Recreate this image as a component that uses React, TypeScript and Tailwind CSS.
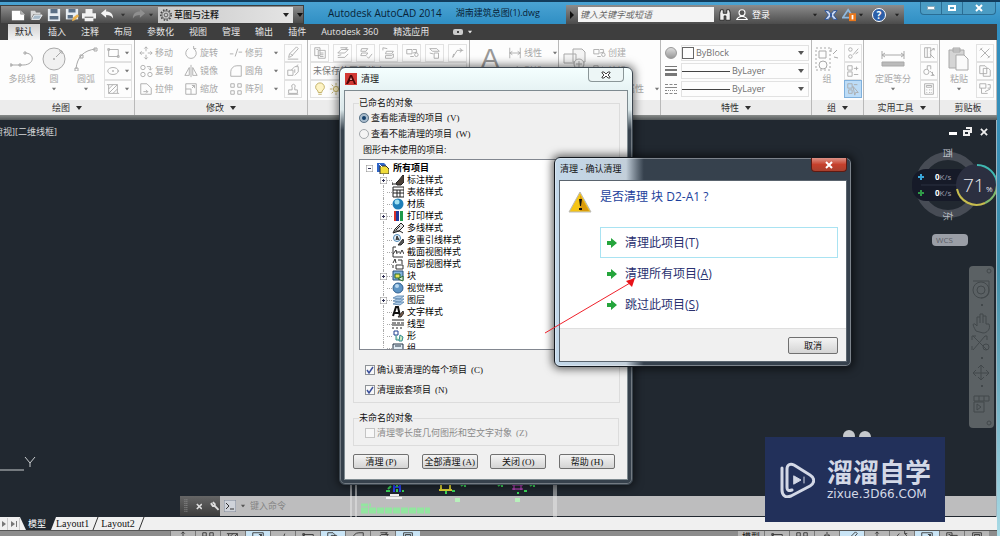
import { useState } from "react";
import type { ReactNode } from "react";
import clsx from "clsx";

const tabs = ["默认", "插入", "注释", "布局", "参数化", "视图", "管理", "输出", "插件", "Autodesk 360", "精选应用"];

// line drawings on a 16 x 16 grid
const glyphs: Record<string, string> = {
  rect: "M3 4h11v8H3zM2 3h2v2H2zM13 11h2v2h-2z",
  ellipse: "M2 8a6 4 0 1 0 12 0a6 4 0 1 0-12 0M7 8h2M8 7v2M13 8h2",
  hatch: "M3 3h10v10H3zM3 8l5-5M3 13l10-10M8 13l5-5M1 3h2M13 13h2",
  move: "M8 1v5M8 10v5M1 8h5M10 8h5M6 3l2-2 2 2M6 13l2 2 2-2M3 6L1 8l2 2M13 6l2 2-2 2",
  copy: "M2 4a2.500 2.500 0 1 0 5 0a2.500 2.500 0 1 0-5 0M2 12a2.500 2.500 0 1 0 5 0a2.500 2.500 0 1 0-5 0M10 12a2.500 2.500 0 1 0 5 0a2.500 2.500 0 1 0-5 0M9 3h4v4M13 7l-2-2M13 7l2-2",
  stretch: "M2 2h7l5 5v7H2zM5 11h5M8 9l2 2-2 2",
  rotate: "M5 3a6 6 0 1 0 6 0M11 3V0M11 3h3",
  mirror: "M8 1v14M6 4v9H1zM10 4v9h5z",
  scale: "M2 2h12v12H2zM2 8h6v6M9 7l3-3M9 4h3v3",
  trim: "M1 9h4M7 12l3-9M11 7h4",
  fillet: "M14 2v12H2V9a7 7 0 0 1 7-7h5",
  array: "M2 2h4v4H2zM10 2h4v4h-4zM2 10h4v4H2zM10 10h4v4h-4z",
  erase: "M3 13l3-1 8-9-2-2-8 8zM5 9l3 2M2 15h12",
  explode: "M2 7h6v6H2zM6 7l4-4h4v6l-4 4M10 6v4M12 2l2-1",
  offset: "M2 14h12M3 13V9h4V6a2 2 0 1 1 3 0v3h3v4z",
  layers: "M2 2h6v9H2zM6 5h8v9H6zM8 8h4M8 10h4M8 12h4M4 4h2",
  layerSet: "M2 8l4-4h8l-4 4zM2 11l4-1M2 13h8l4-4M5 2h8l-3 2",
  layerCheck: "M3 3h7l-2 3H2zM3 8h7l-2 3H2zM9 12l2 2 4-5",
  layerBack: "M5 6h8l-2 3H4zM4 11h7l2-2v4l-2 1H4zM1 2l5 1M1 2v3",
  layerOff: "M2 3h8l3 3h-8zM7 8h5v6H7zM2 8l4 1",
  dimension: "M2 2v12M14 2v12M2 8h12M5 6L2 8l3 2M11 6l3 2-3 2",
  leader: "M2 13L7 5h7M2 13l1-4M10 3a2 2 0 1 1 0 4",
  block: "M2 4h6v5H2zM9 8l5-1M6 12h4M11 10a2 2 0 1 0 4 0a2 2 0 1 0-4 0M9 4h4v3",
  ungroup: "M3 4a2 2 0 1 0 4 0a2 2 0 1 0-4 0M3 12a2 2 0 1 0 4 0a2 2 0 1 0-4 0M8 10l6-7M11 9l3-2",
  groupEdit: "M2 2h5v5H2zM2 9h5v5H2zM9 5h5M12 3v4M9 12h5",
  groupPick: "M2 2h5v5H2zM3 9h4v4H3zM8 5l6 7-3 0-1 3zM9 3h4",
  select: "M3 2h7v11H3zM6 2v11M9 6l5-3M9 9l5 5M12 3h2v2",
  measure: "M2 9a3 3 0 1 0 6 0a3 3 0 1 0-6 0M6 6V2h4v4M9 8l5 5M10 13l4 0M12 9v4",
  calc: "M3 2h10v12H3zM5 4h6v2H5zM5 9h1M8 9h1M10 9h1M5 12h1M8 12h1M10 12h1",
  cut: "M3 3l10 10M13 3L3 13M5 2l-3 3M11 14l3-3",
  clipCopy: "M2 2h6l2 2v7H2zM6 5h6l2 2v7H6z",
  match: "M2 2h7v5H2zM4 7v6h7M11 3h3v4h-3M8 11l6-3",
};

function Glyph({ name, className }: { name: string; className?: string }) {
  return (
    <svg viewBox="0 0 16 16" className={clsx("size-3.5 shrink-0", className)} fill="none" stroke="currentColor" strokeWidth="1">
      <path d={glyphs[name]} />
    </svg>
  );
}

function Caret({ className }: { className?: string }) {
  return (
    <svg viewBox="0 0 6 4" className={clsx("h-1 w-1.5 shrink-0", className)} fill="currentColor">
      <path d="M0 0h6L3 4z" />
    </svg>
  );
}

function Panel({ title, className, caret = true, children }: { title: string; className: string; caret?: boolean; children: ReactNode }) {
  return (
    <section className={clsx("flex flex-col overflow-hidden border-r border-[#b9b9b9]", className)}>
      <div className="flex h-[60px] gap-1 bg-[#fdfdfd] pt-1 text-[#a9a9a9]">{children}</div>
      <button className="flex h-[15px] items-center justify-center gap-1.5 bg-[#ececec] text-[#303030]">
        {title}
        {caret && <Caret />}
      </button>
    </section>
  );
}

function Tool({ icon, label, caret }: { icon: string; label: string; caret?: boolean }) {
  return (
    <button className="flex h-[18px] items-center gap-0.5 whitespace-nowrap">
      <Glyph name={icon} />
      {label}
      {caret && <Caret className="ml-2 scale-75 text-[#777]" />}
    </button>
  );
}

function BigTool({ label, caret, className, children }: { label: string; caret?: boolean; className?: string; children: ReactNode }) {
  return (
    <button className={clsx("flex flex-col items-center whitespace-nowrap", className)}>
      <span className="flex h-[29px] items-center justify-center">{children}</span>
      <span className="h-3 leading-3">{label}</span>
      {caret && <Caret className="mt-0.5 scale-75 text-[#777]" />}
    </button>
  );
}

function SmallButtons({ icons, split, active }: { icons: string[]; split?: boolean; active?: string }) {
  return (
    <div className="flex flex-col">
      {icons.map((icon) => (
        <button
          key={icon}
          aria-label={icon}
          className={clsx(
            "flex h-[18px] items-center justify-center border",
            split ? "w-7 gap-1" : "w-[18px]",
            icon === active ? "border-[#7fb0dc] bg-[#bcdcf7]" : "border-[#e2e2e2]"
          )}
        >
          <Glyph name={icon} />
          {split && <Caret className="scale-75 text-[#777]" />}
        </button>
      ))}
    </div>
  );
}

function PropertySelect({ label, value, line, children }: { label: string; value: string; line?: boolean; children: ReactNode }) {
  return (
    <div className="flex h-[18px] items-center gap-0.5">
      <span className="flex w-4 justify-center">{children}</span>
      <span className="relative flex h-4 flex-1 items-center border border-[#e2e2e2]">
        {line ? <span className="h-px w-12 bg-[#444]" /> : <span className="size-3 border border-[#666]" />}
        <select aria-label={label} className="h-3.5 flex-1 appearance-none pl-0.5 text-[9px] leading-3.5 text-[#707070] outline-none" defaultValue={value}>
          <option>{value}</option>
        </select>
        <Caret className="absolute right-1 text-[#555]" />
      </span>
    </div>
  );
}

function QuickIcon({ label, children }: { label: string; children: ReactNode }) {
  return (
    <button aria-label={label} className="flex w-[18px] items-center justify-center">
      <svg viewBox="0 0 16 16" className="size-3.5">
        {children}
      </svg>
    </button>
  );
}

function TitleBar() {
  return (
    <header className="flex h-6 shrink-0 items-end border-t-2 border-[#123c5c] bg-linear-to-b from-[#4aa3d3] to-[#2f8fc4]">
      <div className="flex h-[19px] w-[304px] shrink-0 items-center border border-[#3d3d3d] bg-linear-to-b from-[#8d8d8d] to-[#4c4c4c] pl-2">
        <QuickIcon label="新建">
          <path d="M1 3h10l4 4v7H1z" fill="#fff" />
          <path d="M11 3v4h4" fill="#bbb" stroke="#999" />
        </QuickIcon>
        <QuickIcon label="打开">
          <path d="M2 3h5l1 2h5v2H5l-3 6z" fill="#d8d8d8" />
          <path d="M6 8h9l-3 5H3z" fill="#a7b9c8" stroke="#fff" />
        </QuickIcon>
        <QuickIcon label="保存">
          <path d="M1 1h14v14H1z" fill="#e6ecf2" />
          <path d="M4 1h8v5H4zM3 9h10v4H3z" fill="#5a6f86" />
        </QuickIcon>
        <QuickIcon label="另存为">
          <path d="M1 1h14v12H1z" fill="#e6ecf2" />
          <path d="M4 1h8v4H4zM3 8h6v4H3z" fill="#5a6f86" />
          <path d="M8 15l1-4 5-4 2 2-5 5z" fill="#e9b04d" />
        </QuickIcon>
        <QuickIcon label="打印">
          <path d="M4 1h8v5H4zM0 6h16v6H0zM3 11h10v4H3z" fill="#f1f1f1" />
          <path d="M3 10h10v1H3z" fill="#444" />
        </QuickIcon>
        <QuickIcon label="放弃">
          <path d="M1 6l6-5v3c5 0 8 3 8 8-2-3-4-4-8-4v3z" fill="#f4f4f4" />
        </QuickIcon>
        <Caret className="mx-1 scale-75 text-[#333]" />
        <QuickIcon label="重做">
          <path d="M15 6L9 1v3c-5 0-8 3-8 8 2-3 4-4 8-4v3z" fill="#8f8f8f" />
        </QuickIcon>
        <Caret className="mr-1 scale-75 text-[#333]" />
        <div className="relative flex h-4 w-[136px] items-center bg-linear-to-r from-[#c9c9c9] to-[#e4e4e4]">
          <svg viewBox="0 0 16 16" className="mx-0.5 size-3" fill="none" stroke="#444">
            <circle cx="8" cy="8" r="2.500" />
            <circle cx="8" cy="8" r="5.500" />
            <circle cx="8" cy="8" r="7" strokeDasharray="2 2" strokeWidth="2" />
          </svg>
          <select aria-label="工作空间" className="h-4 flex-1 appearance-none text-[9px] font-medium leading-4 text-[#111] outline-none">
            <option>草图与注释</option>
          </select>
          <Caret className="absolute right-1 text-[#222]" />
        </div>
        <Caret className="ml-1 text-[#111]" />
      </div>
      <h1 className="ml-6 flex h-[22px] items-center gap-3.5 whitespace-nowrap text-[#082236]">
        <span className="text-[10px]">Autodesk AutoCAD 2014</span>
        <span>湖南建筑总图(1).dwg</span>
      </h1>
      <div className="ml-auto flex h-[19px] w-[338px] shrink-0 items-center bg-linear-to-b from-[#8d8d8d] to-[#4c4c4c] text-white">
        <svg viewBox="0 0 4 8" className="mx-1 h-2 w-1">
          <path d="M0 0l4 4-4 4z" fill="#111" />
        </svg>
        <input
          aria-label="搜索"
          placeholder="键入关键字或短语"
          className="h-[15px] w-[136px] bg-[#f4f4f4] pl-0.5 text-[9px] italic placeholder:text-[#666]"
        />
        <svg viewBox="0 0 16 16" className="ml-1 size-3.5">
          <path d="M2 6l1-4h3v4h4V2h3l1 4v8h-5V9H7v5H2z" fill="#eee" stroke="#222" />
        </svg>
        <button className="ml-1 flex items-center gap-1">
          <svg viewBox="0 0 16 16" className="size-3" fill="#555" stroke="#fff" strokeWidth="1.500">
            <circle cx="8" cy="5" r="4" />
            <path d="M1 14c1-3 4-3 5-4h4c1 1 4 1 5 4z" />
          </svg>
          登录
        </button>
        <Caret className="ml-auto scale-75 text-[#222]" />
        <svg viewBox="0 0 16 16" className="ml-1.5 size-3.5">
          <path d="M1 3h4l4 5-4 5H1l4-5zM15 3h-4L7 8l4 5h4l-4-5z" fill="#c9d8f2" stroke="#25509b" />
        </svg>
        <svg viewBox="0 0 16 16" className="ml-1 size-3.5">
          <path d="M7 2l6 9H1z" fill="none" stroke="#8fb8dd" strokeWidth="2" />
          <path d="M8 6h8v9H8z" fill="#e9771c" />
          <path d="M11 8h2v5h-2z" fill="#fff" />
        </svg>
        <Caret className="ml-0.5 scale-75 text-[#222]" />
        <button className="mx-2 flex size-3.5 items-center justify-center rounded-full border border-white bg-[#2c5fa8] text-[10px] font-bold">?</button>
        <Caret className="mr-1 scale-75 text-[#222]" />
      </div>
      <div className="ml-4 mr-1 flex h-[22px] w-[76px] shrink-0 items-start">
        <div className="flex h-[13px] w-full rounded-b border border-t-0 border-[#2a6d94] bg-[#4b9cc4]">
          <button aria-label="最小化" className="flex flex-1 items-center justify-center border-r border-[#2a6d94]">
            <span className="h-1 w-2 border border-[#8ab] bg-white" />
          </button>
          <button aria-label="还原" className="flex flex-1 items-center justify-center border-r border-[#2a6d94]">
            <span className="h-1.5 w-2 border-2 border-white" />
          </button>
          <button aria-label="关闭" className="flex w-8 items-center justify-center">
            <svg viewBox="0 0 8 8" className="size-2" stroke="#fff" strokeWidth="2">
              <path d="M1 1l6 6M7 1L1 7" />
            </svg>
          </button>
        </div>
      </div>
    </header>
  );
}

function Ribbon() {
  return (
    <div className="flex h-[75px] shrink-0 overflow-hidden bg-[#fdfdfd]">
      <Panel title="绘图" className="w-[135px] shrink-0">
        <BigTool label="多段线" className="ml-2 w-7">
          <svg viewBox="0 0 24 18" className="h-[18px] w-6" fill="none" stroke="currentColor">
            <path d="M1 15h12c12 0 12-12 2-12M0 14h2v2H0zM9 14h2v2H9zM14 2h2v2h-2z" />
          </svg>
        </BigTool>
        <BigTool label="圆" caret className="w-7">
          <svg viewBox="0 0 24 24" className="size-6" fill="none" stroke="currentColor">
            <circle cx="12" cy="12" r="11" fill="#f1f1f1" />
            <path d="M11 12h2M12 11v2M14 10l6-6M17 4h3v3" />
          </svg>
        </BigTool>
        <BigTool label="圆弧" caret className="w-7">
          <svg viewBox="0 0 24 24" className="size-6" fill="none" stroke="currentColor">
            <path d="M2 22C3 10 10 3 22 2M1 21h3v3H1zM6 8h3v3H6zM20 1h3v3h-3z" />
          </svg>
        </BigTool>
        <SmallButtons icons={["rect", "ellipse", "hatch"]} split />
      </Panel>
      <Panel title="修改" className="w-[173px] shrink-0">
        <div className="ml-1 flex w-[41px] flex-col">
          <Tool icon="move" label="移动" />
          <Tool icon="copy" label="复制" />
          <Tool icon="stretch" label="拉伸" />
        </div>
        <div className="flex w-[41px] flex-col">
          <Tool icon="rotate" label="旋转" />
          <Tool icon="mirror" label="镜像" />
          <Tool icon="scale" label="缩放" />
        </div>
        <div className="flex w-[51px] flex-col">
          <Tool icon="trim" label="修剪" caret />
          <Tool icon="fillet" label="圆角" caret />
          <Tool icon="array" label="阵列" caret />
        </div>
        <SmallButtons icons={["erase", "explode", "offset"]} />
      </Panel>
      <Panel title="图层" className="w-[162px] shrink-0">
        <div className="flex flex-1 flex-col px-0.5">
          <div className="flex h-[18px] gap-1">
            {["layers", "layerSet", "layerCheck", "layerBack", "block", "layerOff", "leader"].map((icon) => (
              <button key={icon} aria-label={icon} className="flex w-[19px] items-center justify-center border border-[#e2e2e2]">
                <Glyph name={icon} />
              </button>
            ))}
          </div>
          <div className="flex h-[18px] items-center border border-[#e2e2e2] pl-0.5 text-[#777]">未保存的图层状态</div>
          <div className="flex h-[18px] items-center gap-0.5 border border-[#e2e2e2] pl-0.5">
            <svg viewBox="0 0 16 16" className="size-3.5" fill="#fdf3c4" stroke="#bba95c">
              <path d="M6 12c0-3-3-3-3-6a5 5 0 0 1 10 0c0 3-3 3-3 6zM6 14h4" />
            </svg>
            <svg viewBox="0 0 16 16" className="size-3.5" fill="#fdf3c4" stroke="#bba95c">
              <circle cx="8" cy="8" r="3" />
              <path d="M8 1v3M8 12v3M1 8h3M12 8h3M3 3l2 2M11 11l2 2M13 3l-2 2M3 13l2-2" />
            </svg>
          </div>
        </div>
      </Panel>
      <Panel title="注释" className="w-[89px] shrink-0">
        <BigTool label="文字" className="ml-1.5 w-7">
          <span className="font-['Liberation_Sans',sans-serif] text-[28px] leading-7 text-[#999]">A</span>
        </BigTool>
        <div className="flex flex-col">
          <Tool icon="dimension" label="线性" caret />
          <Tool icon="leader" label="引线" caret />
        </div>
      </Panel>
      <Panel title="块" className="w-[102px] shrink-0">
        <BigTool label="插入" className="ml-1 w-7">
          <svg viewBox="0 0 24 24" className="size-6" fill="#f4f4f4" stroke="currentColor">
            <path d="M10 2h9l3 3v10H10zM1 7h12v9H1z" />
            <circle cx="16" cy="17" r="5" />
            <path d="M16 14v6M13 17h6" />
          </svg>
        </BigTool>
        <div className="flex flex-col">
          <Tool icon="block" label="创建" />
          <Tool icon="groupEdit" label="编辑" />
          <Tool icon="match" label="编辑属性" caret />
        </div>
      </Panel>
      <Panel title="特性" className="w-[151px] shrink-0">
        <div className="flex flex-1 flex-col px-0.5">
          <PropertySelect label="对象颜色" value="ByBlock">
            <span className="size-3 rounded-full border border-[#999] bg-linear-to-b from-[#ddd] to-[#999]" />
          </PropertySelect>
          <PropertySelect label="线宽" value="ByLayer" line>
            <span className="flex w-3 flex-col gap-0.5">
              <span className="h-px bg-[#777]" />
              <span className="h-0.5 bg-[#777]" />
              <span className="h-[3px] bg-[#777]" />
            </span>
          </PropertySelect>
          <PropertySelect label="线型" value="ByLayer" line>
            <span className="flex w-3 flex-col gap-0.5">
              <span className="border-t border-dashed border-[#888]" />
              <span className="border-t border-[#888]" />
              <span className="border-t border-dotted border-[#888]" />
              <span className="border-t border-dashed border-[#888]" />
            </span>
          </PropertySelect>
        </div>
      </Panel>
      <Panel title="组" className="w-[52px] shrink-0">
        <BigTool label="组" className="ml-0.5 w-[26px]">
          <svg viewBox="0 0 24 24" className="size-6" fill="none" stroke="currentColor">
            <path d="M1 1h14v22H1z" strokeDasharray="2 2" />
            <path d="M4 4h7v7H4zM18 7l4-4M19 10l4 1M16 5V1" />
            <circle cx="8" cy="18" r="4" />
          </svg>
        </BigTool>
        <SmallButtons icons={["ungroup", "groupEdit", "groupPick"]} active="groupPick" />
      </Panel>
      <Panel title="实用工具" className="w-[76px] shrink-0">
        <BigTool label="定距等分" caret className="ml-1.5 w-[46px]">
          <svg viewBox="0 0 24 16" className="h-4 w-6" fill="none" stroke="currentColor">
            <path d="M1 0v8M23 0v8M1 4h22M4 2L1 4l3 2M20 2l3 2-3 2" />
            <path d="M1 11h22v4H1z" fill="#bbb" />
          </svg>
        </BigTool>
        <SmallButtons icons={["select", "measure", "calc"]} />
      </Panel>
      <Panel title="剪贴板" caret={false} className="flex-1">
        <BigTool label="粘贴" caret className="ml-1.5 w-[26px]">
          <svg viewBox="0 0 22 24" className="h-6 w-[22px]" fill="#d5d5d5" stroke="currentColor">
            <path d="M1 3h15v18H1zM5 1h7v4H5z" />
            <path d="M8 8h8l4 4v11H8z" fill="#fafafa" />
          </svg>
        </BigTool>
        <SmallButtons icons={["cut", "clipCopy", "match"]} />
      </Panel>
    </div>
  );
}

function NetworkGauge() {
  return (
    <div className="absolute right-[-3px] top-[28px] h-[74px] w-[90px]">
      <svg viewBox="0 0 90 74" className="h-[74px] w-[90px]">
        <circle cx="39" cy="37" r="29" fill="none" stroke="#474c55" strokeWidth="8" />
        <g fill="#b8bcc2" fontSize="10" textAnchor="middle">
          <text transform="translate(35 5) rotate(90)">西</text>
          <text transform="translate(35 68) rotate(90)">东</text>
        </g>
        <rect x="3" y="21" width="60" height="32" rx="14" fill="#161a28" />
        <path d="M12 37h44" stroke="#2b3040" />
        <path d="M9 29h6M12 26v6" stroke="#3aa5d8" strokeWidth="2" />
        <path d="M9 45h6M12 42v6" stroke="#2f9a48" strokeWidth="2" />
        <g fill="#9a9eaa" fontSize="8">
          <text x="26" y="32">
            <tspan fill="#fff" fontWeight="bold">0</tspan>K/s
          </text>
          <text x="26" y="48">
            <tspan fill="#fff" fontWeight="bold">0</tspan>K/s
          </text>
        </g>
        <circle cx="68" cy="37" r="21" fill="#2b2f40" />
        <path d="M68 17a20 20 0 0 1 20 20" fill="none" stroke="#3fb8b0" strokeWidth="2" />
        <path d="M88 37a20 20 0 0 1-12 18" fill="none" stroke="#7fb86c" strokeWidth="2" />
        <path d="M76 55a20 20 0 0 1-28-14" fill="none" stroke="#c7bd4e" strokeWidth="2" />
        <text x="54" y="44" fontSize="19" fontWeight="300" fill="#e8e8ee">71</text>
        <text x="77" y="44" fontSize="8" fill="#e8e8ee">%</text>
      </svg>
    </div>
  );
}

function Canvas() {
  return (
    <main className="relative flex min-h-0 flex-1 flex-col justify-end overflow-hidden border-r border-[#9fb3bd] bg-[#212830] text-[#d5d7d9]">
      <span className="absolute -left-1.5 top-1.5 whitespace-nowrap">俯视][二维线框]</span>
      <div className="absolute right-2 top-[7px] flex items-center gap-1.5 text-[#eee]">
        <button aria-label="最小化" className="mt-1 h-[3px] w-2 bg-white" />
        <button aria-label="还原">
          <svg viewBox="0 0 9 9" className="size-[9px]" fill="none" stroke="currentColor" strokeWidth="2">
            <path d="M1 4h5v4H1zM3 1h5v5" />
          </svg>
        </button>
        <button aria-label="关闭">
          <svg viewBox="0 0 9 9" className="ml-0.5 size-2" stroke="currentColor" strokeWidth="2">
            <path d="M1 1l7 7M8 1L1 8" />
          </svg>
        </button>
      </div>
      <NetworkGauge />
      <button className="absolute right-7 top-[114px] h-3 w-9 rounded bg-[#9a9ea6] pl-1 text-left text-[8px] leading-3 text-[#5c6068]">WCS</button>
      <nav aria-label="导航栏" className="absolute right-0.5 top-[146px] h-[162px] w-[25px] rounded-sm bg-[#5b6164] text-[#42484b]">
        <svg viewBox="0 0 25 162" className="h-[162px] w-[25px]" fill="none" stroke="currentColor">
          <circle cx="20" cy="5" r="2" />
          <circle cx="12" cy="24" r="8" />
          <circle cx="12" cy="24" r="4" />
          <path d="M4 15h16v10c0 4-3 7-8 7" />
          <path d="M12 39h2M12 120h2" strokeWidth="2" />
          <path d="M7 65c-3-5-4-8-1-7l2 2v-9h3v-3h3v2h3v8h3c2 5-2 9-6 9zM11 51v6M14 50v7" />
          <path d="M4 70l14 14M4 84l12-14M3 70h4M3 70v4M16 70h2v4M3 84v-4" />
          <circle cx="17" cy="81" r="3" />
          <path d="M12 92h2" strokeWidth="2" />
          <path d="M12 99v15M4 107h16M9 102l3-3 3 3M9 111l3 3 3-3M7 104l-3 3 3 3M17 104l3 3-3 3" />
          <path d="M5 130h15v5H5zM10 130v5M15 130v5M5 136h10v10H5zM8 138l4 3-4 3z" />
          <circle cx="20" cy="157" r="2" />
        </svg>
      </nav>
      <svg viewBox="0 0 40 20" className="absolute bottom-11 left-0 h-5 w-10" fill="none" stroke="#c9ccce">
        <path d="M0 17h24M25 4l5 6 5-6M30 10v4" />
      </svg>
      <svg viewBox="0 0 32 14" className="absolute bottom-[75px] right-[123px] h-3.5 w-8" fill="#c5c8cc">
        <circle cx="8" cy="8" r="6" />
        <circle cx="24" cy="9" r="6" />
      </svg>

      <div className="mb-px ml-[180px] flex h-5 shrink-0 text-[#777]">
        <div className="flex w-10 items-center gap-2 bg-linear-to-b from-[#666] to-[#3d3d3d] pl-1 text-[#ddd]">
          <svg viewBox="0 0 4 14" className="h-3.5 w-1" stroke="#999" strokeDasharray="1 1">
            <path d="M1 0v14M3 0v14" />
          </svg>
          <svg viewBox="0 0 8 8" className="size-[7px]" stroke="currentColor" strokeWidth="2">
            <path d="M1 1l6 6M7 1L1 7" />
          </svg>
          <svg viewBox="0 0 10 10" className="size-2.5" fill="none" stroke="currentColor" strokeWidth="2">
            <path d="M9 9L5 5M1 2l2 3h2V3L3 1" />
          </svg>
        </div>
        <div className="flex flex-1 items-center gap-1 bg-[#bdbdbe] pl-1">
          <svg viewBox="0 0 12 12" className="size-3" fill="#cfd3da" stroke="#7d8594">
            <path d="M0 0h12v12H0z" />
            <path d="M2 3l3 3-3 3M6 9h4" stroke="#333" />
          </svg>
          <Caret className="scale-75 text-[#555]" />
          <input aria-label="命令" placeholder="键入命令" className="w-32 bg-transparent text-[9px] outline-none placeholder:text-[#858585]" />
        </div>
      </div>
      <svg viewBox="0 0 300 36" className="absolute bottom-0 left-[340px] h-9 w-[300px]" fill="none">
        <path d="M11 0v36M16 0v36M214 0v36M216 0v36" stroke="#e8e8e8" />
        <path d="M54 2v9M60 2v9M54 6h6" stroke="#2a45ff" strokeWidth="2" />
        <path d="M48 8l3-3M57 3v3M57 8v3M46 10h4M62 10h2" stroke="#3bdc5a" strokeWidth="2" />
        <path d="M50 14h9M46 17h16" stroke="#f2f2f2" strokeWidth="2" />
        <path d="M101 1v8M110 1v8M99 9h13" stroke="#e3d936" strokeWidth="2" />
        <path d="M106 10v3M112 10h3M121 5l4-3v4M158 5l4-3v4M190 5l4-3v4M178 11v2M184 10h3" stroke="#3bdc5a" strokeWidth="2" />
        <path d="M174 1v8M181 1v8M172 4h11M172 8h11" stroke="#d849d8" />
        <path d="M115 18h5M115 20h5M175 18h5M175 20h5" stroke="#b7f0bb" strokeWidth="2" />
        <path d="M21 24h10M21 28h69M21 31h69" stroke="#93e6a0" strokeWidth="3" strokeDasharray="7 1" />
      </svg>
    </main>
  );
}

function StatusIcons({ items }: { items: string[] }) {
  return (
    <div className="flex">
      {items.map((icon, i) => (
        <button
          key={icon + i}
          aria-label={icon}
          className={clsx("flex w-[25px] items-start justify-center border-l border-[#777] text-[#333]", i % 3 === 0 && i > 0 ? "bg-[#c9e4f5]" : "bg-[#b5b5b5]")}
        >
          <Glyph name={icon} />
        </button>
      ))}
    </div>
  );
}

function Footer() {
  return (
    <footer className="shrink-0">
      <div className="flex h-[13px] items-center bg-[#f0f0f0] text-[10px] text-[#111]">
        <button aria-label="下一个布局" className="flex h-3 w-2 items-center justify-center border-r border-[#ccc]">
          <svg viewBox="0 0 4 6" className="h-1.5 w-1" fill="#777">
            <path d="M0 0l4 3-4 3z" />
          </svg>
        </button>
        <button aria-label="最后一个布局" className="flex h-3 w-3 items-center justify-center border-r border-[#ccc]">
          <svg viewBox="0 0 6 6" className="size-1.5" fill="#777">
            <path d="M0 0l4 3-4 3zM5 0h1v6H5z" />
          </svg>
        </button>
        <svg viewBox="0 0 6 13" className="h-[13px] w-1.5" fill="#212830">
          <path d="M0 0h6v13z" />
        </svg>
        <button className="h-[13px] bg-[#212830] px-0.5 text-[9px] leading-[13px] text-white">模型</button>
        <svg viewBox="0 0 8 13" className="h-[13px] w-2">
          <path d="M0 0h8L3 13H0z" fill="#212830" />
        </svg>
        <button className="font-['Liberation_Serif',serif] font-medium leading-3">Layout1</button>
        <svg viewBox="0 0 8 13" className="mx-0.5 h-[13px] w-2" stroke="#333">
          <path d="M7 0L2 13" />
        </svg>
        <button className="font-['Liberation_Serif',serif] font-medium leading-3">Layout2</button>
        <svg viewBox="0 0 8 13" className="mx-0.5 h-[13px] w-2" stroke="#333">
          <path d="M7 0L2 13" />
        </svg>
      </div>
      <div className="flex h-1.5 items-start overflow-hidden border-t border-[#555] bg-[#8c8c8c]">
        <div className="w-[170px] shrink-0" />
        <StatusIcons items={["move", "array", "hatch", "scale", "trim", "rect", "clipCopy", "fillet", "layerSet", "calc"]} />
        <div className="ml-auto mr-2 flex text-[9px]">
          <span className="bg-[#b5b5b5] px-1 leading-3 text-[#111]">模型</span>
          <StatusIcons items={["rect", "array", "mirror", "erase", "move", "rotate", "scale", "layers", "calc"]} />
        </div>
      </div>
    </footer>
  );
}

const tree = [
  { label: "标注样式", icon: "dim", expandable: true },
  { label: "表格样式", icon: "table" },
  { label: "材质", icon: "ball" },
  { label: "打印样式", icon: "plot", expandable: true },
  { label: "多线样式", icon: "mline" },
  { label: "多重引线样式", icon: "mleader" },
  { label: "截面视图样式", icon: "section" },
  { label: "局部视图样式", icon: "detail" },
  { label: "块", icon: "block", expandable: true },
  { label: "视觉样式", icon: "visual" },
  { label: "图层", icon: "layer", expandable: true },
  { label: "文字样式", icon: "text" },
  { label: "线型", icon: "ltype" },
  { label: "形", icon: "shape" },
  { label: "组", icon: "group" },
];

const treeIcons: Record<string, ReactNode> = {
  dim: (
    <>
      <path d="M0 10h6M0 8v3" stroke="#222" />
      <path d="M4 9l3-3 4-5 1 1v6l-3 3H5z" fill="#4a4038" stroke="#222" />
    </>
  ),
  table: <path d="M1 1h11v10H1zM1 4h11M1 7h11M5 4v7M8 4v7" fill="#fff" stroke="#222" />,
  ball: (
    <>
      <circle cx="6" cy="6" r="5.500" fill="#1e7fb8" />
      <circle cx="5" cy="4" r="2.500" fill="#9fe0f0" />
    </>
  ),
  plot: (
    <>
      <path d="M2 1h2v10H2z" fill="#d8322b" />
      <path d="M4 1h3v10H4z" fill="#203a9b" />
      <path d="M8 1h3v10H8z" fill="#1f9a4a" />
    </>
  ),
  mline: <path d="M1 11l2-4 6-6 3 3-5 5zM4 8l4-4M2 9h6l3 2" fill="#ddd" stroke="#222" />,
  mleader: (
    <>
      <circle cx="5" cy="4" r="3.500" fill="#e7f2fb" stroke="#4c86b5" />
      <path d="M4 6l1-4 2 4M6 11l5-6 1 3-3 3z" fill="#555" stroke="#333" />
    </>
  ),
  section: <path d="M1 1h3M1 1v10h10M1 8l3-4 1 4M8 8l2-4 2 4M5 6h3" fill="none" stroke="#333" />,
  detail: <path d="M1 5l2-4 1 4M6 2h4v4M4 7h7v4H4zM1 7v3" fill="none" stroke="#333" />,
  block: (
    <>
      <path d="M1 1h10v9H1z" fill="#7fb2dc" stroke="#274f78" />
      <path d="M3 4h5v4H3z" fill="#e8e35a" stroke="#2b6b2b" />
      <path d="M6 9l5-3v5z" fill="#dff0df" stroke="#2b6b2b" />
    </>
  ),
  visual: (
    <>
      <circle cx="6" cy="6" r="5" fill="#5e94c4" stroke="#2f5f8f" />
      <circle cx="5" cy="4" r="2" fill="#b8d6ee" />
    </>
  ),
  layer: <path d="M1 4l4-2h7l-4 3zM1 7l4-2h7l-4 3zM1 10l4-2h7l-4 3z" fill="#a8c8e6" stroke="#6c93b8" />,
  text: (
    <>
      <path d="M1 10l3-9h2l2 9M2 7h5" fill="none" stroke="#111" strokeWidth="2" />
      <path d="M6 11l5-6 1 2-3 4z" fill="#7a5a48" stroke="#333" />
    </>
  ),
  ltype: <path d="M0 2h12M0 5h4M5 5h3M9 5h3M0 7h12M0 10h2M4 10h2M8 10h2" fill="none" stroke="#222" />,
  shape: (
    <>
      <path d="M2 1h4v4H2z" fill="#fff" stroke="#1f3f8f" />
      <path d="M4 5v5h3M8 5l3 2-1 4H7z" fill="#cdeac0" stroke="#2f8a8f" />
    </>
  ),
  group: <path d="M1 2h10v6H1zM3 4h6" fill="#e1ecf5" stroke="#234" />,
};

function Hotkey({ value }: { value: string }) {
  return <span className="ml-0.5 font-['Liberation_Serif',serif] text-[9px]">({value})</span>;
}

function CheckRow({ label, hotkey, disabled, defaultChecked }: { label: string; hotkey: string; disabled?: boolean; defaultChecked?: boolean }) {
  return (
    <label className={clsx("relative flex items-center gap-0.5", disabled && "text-[#8a8a8a]")}>
      <input
        type="checkbox"
        disabled={disabled}
        defaultChecked={defaultChecked}
        className="peer size-2.5 appearance-none border border-[#8e9297] bg-[#f8f8f8] disabled:border-[#c4c4c4]"
      />
      <svg viewBox="0 0 10 10" className="pointer-events-none absolute left-0 hidden size-2.5 peer-checked:block" fill="none" stroke="#3a4f9b" strokeWidth="1.500">
        <path d="M2 5l2 3 4-6" />
      </svg>
      {label}
      <Hotkey value={hotkey} />
    </label>
  );
}

function PurgeDialog() {
  const [mode, setMode] = useState("V");
  return (
    <div
      role="dialog"
      aria-label="清理"
      className="absolute left-[339px] top-[67px] flex w-[294px] flex-col rounded-md border border-[#3c464f] bg-linear-to-b from-[#f4ffff] from-0% via-[#dbe8ea] via-10% to-[#36414c] to-15% px-1 pb-1 text-[#111] shadow-[0_0_8px_2px_rgba(0,0,0,0.5),inset_0_0_0_1px_rgba(255,255,255,0.3)]"
    >
      <div className="flex h-[22px] items-center pl-px">
        <svg viewBox="0 0 12 12" className="size-3">
          <path d="M0 0h12v12H0z" fill="#d23a35" />
          <path d="M1 11l4-9h2l4 9H9L8 8H5l-2 3z" fill="#4d0708" />
          <path d="M6 4l1 3H5z" fill="#f3b4ac" />
        </svg>
        <span className="ml-1">清理</span>
        <button aria-label="关闭" className="mb-auto ml-auto mr-1 flex h-3.5 w-9 items-center justify-center rounded-b border border-t-0 border-[#8b9698] bg-[#edf6f6]">
          <svg viewBox="0 0 10 8" className="h-2 w-2.5" fill="#fff" stroke="#444">
            <path d="M1 1h2l2 2 2-2h2v1L7 4l2 2v1H7L5 5 3 7H1V6l2-2-2-2z" />
          </svg>
        </button>
      </div>
      <div className="flex flex-col border border-[#7e8a90] bg-[#f0f0f0] px-2 pb-2.5 pt-[5px]">
        <fieldset className="flex flex-col border border-[#dcdcdc] px-[5px] pb-1.5">
          <legend className="leading-[14px]">已命名的对象</legend>
          {[
            ["V", "查看能清理的项目"],
            ["W", "查看不能清理的项目"],
          ].map(([key, label]) => (
            <label key={key} className="flex h-4 items-center gap-0.5">
              <input
                type="radio"
                name="mode"
                checked={mode === key}
                onChange={() => setMode(key)}
                className="size-2.5 appearance-none rounded-full border border-[#a5a9ad] bg-[#f4f4f4] checked:border-[3px] checked:border-[#a9bccd] checked:bg-[#123f6b] checked:outline checked:-outline-offset-1 checked:outline-[#5d7487]"
              />
              {label}
              <Hotkey value={key} />
            </label>
          ))}
          <p className="ml-1 h-4 leading-4">图形中未使用的项目:</p>
          <ul role="tree" className="mt-px h-[191px] w-[255px] overflow-hidden border border-[#828790] bg-white pl-1.5 pt-0.5 text-black">
            <li className="flex h-3 items-center gap-1 font-bold leading-3">
              <svg viewBox="0 0 7 7" className="size-[7px]" fill="#fff" stroke="#888">
                <path d="M0 0h7v7H0z" />
                <path d="M2 3.500h3" stroke="#335" />
              </svg>
              <svg viewBox="0 0 12 12" className="size-3">
                <path d="M0 1h7l2 2v7H0z" fill="#2f66c9" />
                <path d="M3 4h6l3 3v5H3z" fill="#f0dc3a" stroke="#333" />
                <path d="M2 2l3 3" stroke="#fff" />
              </svg>
              所有项目
            </li>
            {tree.map((item) => (
              <li key={item.label} className="ml-[17px] flex h-3 items-center whitespace-nowrap border-l border-dotted border-[#aaa] leading-3">
                <svg viewBox="0 0 7 7" className="-ml-1 size-[7px]" fill="#fff" stroke="#888">
                  {item.expandable && (
                    <>
                      <path d="M0 0h7v7H0z" />
                      <path d="M2 3.500h3M3.500 2v3" stroke="#335" />
                    </>
                  )}
                </svg>
                <span className="w-[5px] border-t border-dotted border-[#aaa]" />
                <svg viewBox="0 0 12 12" className="mr-[3px] size-3">
                  {treeIcons[item.icon]}
                </svg>
                {item.label}
              </li>
            ))}
          </ul>
          <div className="ml-1.5 mt-3.5 flex flex-col gap-2">
            <CheckRow label="确认要清理的每个项目" hotkey="C" defaultChecked />
            <CheckRow label="清理嵌套项目" hotkey="N" defaultChecked />
          </div>
        </fieldset>
        <fieldset className="mt-2 border border-[#dcdcdc] pb-1.5 pl-[11px] pt-0.5">
          <legend className="-ml-1.5 leading-[14px]">未命名的对象</legend>
          <CheckRow label="清理零长度几何图形和空文字对象" hotkey="Z" disabled />
        </fieldset>
        <div className="mr-1 mt-2 flex justify-between">
          {[
            ["清理", "P"],
            ["全部清理", "A"],
            ["关闭", "O"],
            ["帮助", "H"],
          ].map(([label, key]) => (
            <button
              key={key}
              className="h-[15px] w-14 whitespace-nowrap rounded-xs border border-[#707070] bg-linear-to-b from-[#f4f4f4] to-[#d4d4d4] leading-3"
            >
              {label}
              <Hotkey value={key} />
            </button>
          ))}
        </div>
      </div>
    </div>
  );
}

const choices = [
  { label: "清理此项目", key: "T" },
  { label: "清理所有项目", key: "A" },
  { label: "跳过此项目", key: "S" },
];

function ConfirmDialog() {
  return (
    <div
      role="alertdialog"
      aria-label="清理 - 确认清理"
      className="absolute left-[554px] top-[157px] flex w-[298px] flex-col rounded-md border border-[#14191f] bg-linear-to-r from-[#c3d8ea] from-0% via-[#c3cfda] via-24% to-[#36414d] to-30% px-1 pb-1 shadow-[0_0_8px_2px_rgba(0,0,0,0.6),inset_0_0_0_1px_rgba(255,255,255,0.35)]"
    >
      <div className="flex h-[22px] items-center pl-px text-[#111]">
        清理 - 确认清理
        <button aria-label="关闭" className="mb-auto ml-auto flex h-3.5 w-9 items-center justify-center rounded-b border border-t-0 border-[#5e1a12] bg-linear-to-b from-[#dc9186] via-[#c6402c] to-[#a8402e]">
          <svg viewBox="0 0 8 8" className="size-2" stroke="#fff" strokeWidth="2">
            <path d="M1 1l6 6M7 1L1 7" />
          </svg>
        </button>
      </div>
      <div className="border border-[#5a646e] bg-white">
        <div className="flex h-[147px] px-2 pt-2">
          <svg viewBox="0 0 24 22" className="mt-0.5 h-[22px] w-6 shrink-0">
            <path d="M12 1l11 20H1z" fill="#f5c415" stroke="#b9b9b9" />
            <path d="M12 4v16h9z" fill="#d99a0c" />
            <path d="M11 8h3l-1 7h-1zM11 17h3v2h-3z" fill="#111" />
          </svg>
          <div className="ml-2 flex-1">
            <h2 className="h-4 text-[12px] leading-4 text-[#1c3f9c]">是否清理 块 D2-A1 ?</h2>
            <div className="mt-[22px] flex flex-col">
              {choices.map((choice, i) => (
                <button
                  key={choice.key}
                  className={clsx(
                    "flex h-[31px] items-center gap-2 border pl-1.5 text-[12px] text-[#2a3170]",
                    i === 0 ? "border-[#a9e3f2]" : "border-transparent"
                  )}
                >
                  <svg viewBox="0 0 10 10" className="size-2.5">
                    <path d="M0 3h4V0l6 5-6 5V7H0z" fill="#25a53c" />
                  </svg>
                  <span>
                    {choice.label}({i === 0 ? choice.key : <u>{choice.key}</u>})
                  </span>
                </button>
              ))}
            </div>
          </div>
        </div>
        <div className="flex h-[33px] items-center justify-end border-t border-[#dfdfdf] bg-[#f0f0f0] pr-2">
          <button className="h-[17px] w-[50px] rounded-xs border border-[#707070] bg-linear-to-b from-[#f4f4f4] to-[#d4d4d4] leading-[15px] text-[#111]">取消</button>
        </div>
      </div>
    </div>
  );
}

function Watermark() {
  return (
    <div className="absolute bottom-[14px] right-[55px] flex h-[85px] w-[180px] items-center bg-[#22305a] pl-3.5 text-[#d3d8e6]">
      <svg viewBox="0 0 36 36" className="h-9 w-9 shrink-0" fill="none" stroke="currentColor" strokeWidth="3" strokeLinecap="round" strokeLinejoin="round">
        <path d="M3 6v22c0 6 4 8 9 6l19-10c5-3 5-8 0-11L15 3c-4-2-7 0-7 4v18c0 4 2 4 5 3" />
        <path d="M15 14l7 4-7 4z" fill="currentColor" strokeWidth="1" />
        <path d="M25 15v6" strokeWidth="1" />
      </svg>
      <div className="ml-3 whitespace-nowrap">
        <p className="text-[26px] font-bold leading-7">溜溜自学</p>
        <p className="font-['DejaVu_Sans',sans-serif] text-[12px] leading-4">zixue.3D66.COM</p>
      </div>
    </div>
  );
}

export default function App() {
  const [activeTab, setActiveTab] = useState(tabs[0]);

  return (
    <div className="relative flex h-screen flex-col overflow-hidden bg-linear-to-b from-[#2f8fc4] via-[#3f8ea8] to-[#a9dbe6] font-['Open_Sans','Noto_Sans_CJK_SC',sans-serif] text-[9px] leading-3">
      <TitleBar />
      <div className="flex min-h-0 flex-1 flex-col pr-[3px]">
        <div className="flex h-4 shrink-0 items-stretch gap-px bg-[#3e3e3e] pl-2 text-[#e6e6e6]">
          {tabs.map((tab) => (
            <button
              key={tab}
              onClick={() => setActiveTab(tab)}
              className={clsx("whitespace-nowrap px-[7px]", tab === activeTab && "bg-linear-to-b from-[#d0d0d0] to-[#f4f4f4] text-[#222]")}
            >
              {tab}
            </button>
          ))}
          <button aria-label="最小化功能区" className="ml-4 flex items-center gap-1">
            <span className="flex h-1.5 w-2.5 items-center justify-center rounded-xs bg-[#ccc]">
              <span className="size-0.5 bg-[#444]" />
            </span>
            <Caret className="scale-75" />
          </button>
        </div>
        <Ribbon />
        <div className="h-[5px] shrink-0 bg-linear-to-b from-[#8a8d8c] to-[#555a5b]" />
        <Canvas />
        <Footer />
      </div>

      <PurgeDialog />
      <ConfirmDialog />
      <svg viewBox="0 0 92 58" className="absolute left-[544px] top-[277px] h-[58px] w-[92px]">
        <path d="M1 56L86 6" stroke="#f0202a" />
        <path d="M91 1l-3 9-6-6z" fill="#e81219" />
      </svg>
      <Watermark />
    </div>
  );
}
